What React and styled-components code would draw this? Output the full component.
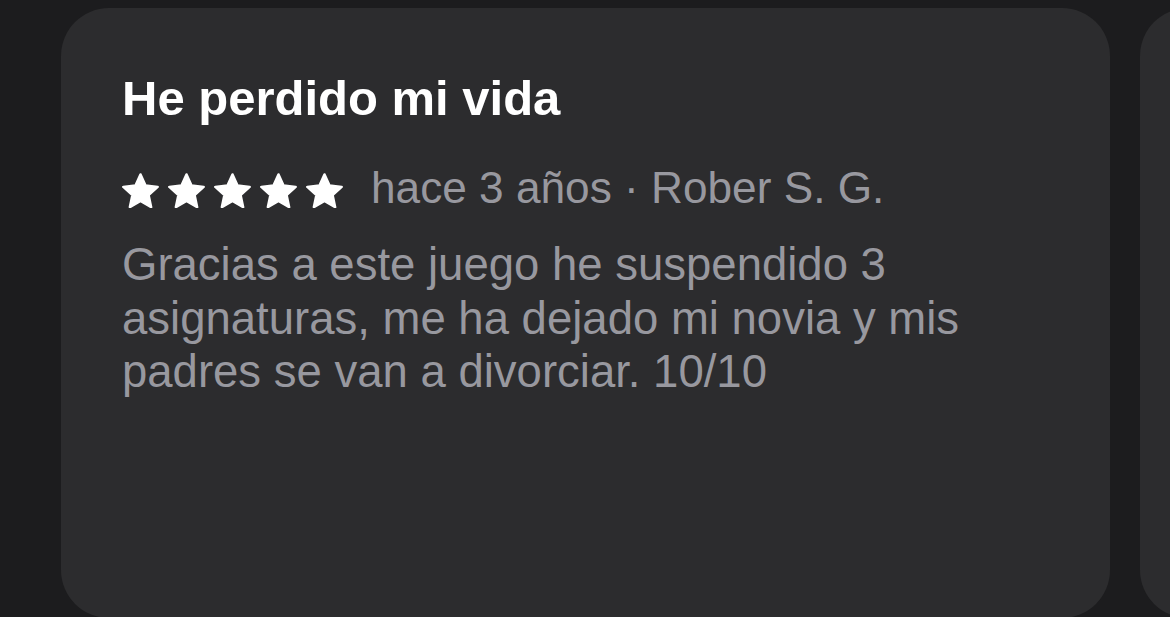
import React from 'react'
import styled, { createGlobalStyle } from 'styled-components'

const GlobalStyle = createGlobalStyle`
  html, body {
    margin: 0;
    padding: 0;
    background: #1c1c1e;
    font-family: "Liberation Sans", Arial, sans-serif;
  }
`

const Carousel = styled.div`
  display: flex;
  gap: 30px;
  width: 1170px;
  height: 617px;
  padding: 8px 0 0 61px;
  box-sizing: border-box;
  overflow: hidden;
`

const Card = styled.article`
  flex: 0 0 1049px;
  height: 610px;
  box-sizing: border-box;
  padding: 66px 60px 0 61px;
  background: #2c2c2e;
  border-radius: 48px;
`

const Title = styled.h2`
  margin: 0;
  font-size: 49px;
  line-height: 49px;
  font-weight: 700;
  color: #ffffff;
`

const Meta = styled.div`
  display: flex;
  align-items: flex-start;
  gap: 28px;
  margin-top: 38px;
  height: 54px;
`

const Stars = styled.div`
  display: flex;
  gap: 9px;
  margin-top: 12px;
`

const Byline = styled.span`
  font-size: 44.2px;
  line-height: 54px;
  color: #98989f;
`

const Body = styled.p`
  margin: 23px 0 0;
  font-size: 45.5px;
  line-height: 53.5px;
  color: #98989f;
  max-width: 850px;
`

const starPoints =
  '12,2.5 14.763,8.698 21.511,9.41 16.47,13.952 17.878,20.59 12,17.2 6.122,20.59 7.53,13.952 2.489,9.41 9.237,8.698'

const Star = () => (
  <svg width="37" height="35" viewBox="1.8 1.7 20.4 19.4">
    <polygon
      points={starPoints}
      fill="#ffffff"
      stroke="#ffffff"
      strokeWidth="1.4"
      strokeLinejoin="round"
    />
  </svg>
)

const Review = ({ title, rating, when, author, text }) => (
  <Card>
    <Title>{title}</Title>
    <Meta>
      <Stars>
        {Array.from({ length: rating }).map((_, i) => <Star key={i} />)}
      </Stars>
      <Byline>{when} · {author}</Byline>
    </Meta>
    <Body>{text}</Body>
  </Card>
)

const App = () => (
  <>
    <GlobalStyle />
    <Carousel>
      <Review
        title="He perdido mi vida"
        rating={5}
        when="hace 3 años"
        author="Rober S. G."
        text="Gracias a este juego he suspendido 3 asignaturas, me ha dejado mi novia y mis padres se van a divorciar. 10/10"
      />
      <Card />
    </Carousel>
  </>
)

export default App
